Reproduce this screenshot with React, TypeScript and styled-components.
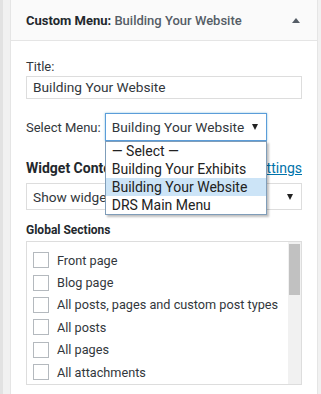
import styled, { createGlobalStyle } from 'styled-components';

const GlobalStyle = createGlobalStyle`
  body {
    margin: 0;
    background: #f1f1f1;
    font-family: Roboto, "Liberation Sans", sans-serif;
    color: #32373c;
  }
`;

const Sidebar = styled.div`
  border-left: 3px solid #e2e2e2;
  padding-left: 7px;
  height: 394px;
  overflow: hidden;
`;

const Widget = styled.div`
  width: 306px;
  margin-top: -1px;
  background: #fff;
  border: 1px solid #e5e5e5;
`;

const Header = styled.div`
  display: flex;
  align-items: center;
  justify-content: space-between;
  height: 40px;
  padding: 0 17px 0 15px;
  background: #fafafa;
  border-bottom: 1px solid #e5e5e5;
  font-size: 13px;
  font-weight: 700;
  color: #23282d;
`;

const InTitle = styled.span`
  font-weight: 500;
  color: #555d66;
`;

const Caret = styled.span`
  width: 0;
  height: 0;
  border-left: 4px solid transparent;
  border-right: 4px solid transparent;
  border-bottom: 5px solid #555d66;
`;

const Body = styled.div`
  padding: 17px 15px 20px;
`;

const Label = styled.div`
  font-size: 13px;
  line-height: 17px;
`;

const TextInput = styled.div`
  height: 21px;
  margin-top: 1px;
  padding: 0 6px;
  border: 1px solid #ddd;
  font-size: 13.7px;
  line-height: 21px;
  color: #32373c;
`;

const MenuRow = styled.div`
  display: flex;
  align-items: center;
  gap: 4px;
  margin-top: 14px;
`;

const SelectWrap = styled.div`
  position: relative;
`;

const SelectBox = styled.div<{ $focused?: boolean; $width: string }>`
  display: flex;
  align-items: center;
  justify-content: space-between;
  box-sizing: border-box;
  width: ${(p) => p.$width};
  height: ${(p) => (p.$focused ? '28px' : '27px')};
  padding: 0 8px 0 6px;
  border: 1px solid ${(p) => (p.$focused ? '#5b9dd9' : '#ddd')};
  box-shadow: ${(p) => (p.$focused ? '0 0 2px rgba(30, 140, 190, 0.5)' : 'none')};
  background: #fff;
  font-size: 13.7px;
  color: #32373c;
  white-space: nowrap;
`;

const Arrow = styled.span`
  width: 0;
  height: 0;
  border-left: 3.5px solid transparent;
  border-right: 3.5px solid transparent;
  border-top: 6px solid #222;
`;

const Dropdown = styled.ul`
  position: absolute;
  top: 100%;
  left: 0;
  right: 0;
  margin: 0;
  padding: 0;
  list-style: none;
  background: #fff;
  border: 1px solid #7f9db9;
  box-shadow: 2px 2px 2px rgba(0, 0, 0, 0.25);
  z-index: 2;
`;

const Option = styled.li<{ $selected?: boolean }>`
  height: 18px;
  padding-left: 6px;
  font-size: 14px;
  line-height: 18px;
  color: #222;
  background: ${(p) => (p.$selected ? '#cce4f7' : 'transparent')};
  white-space: nowrap;
`;

const SectionHead = styled.div`
  display: flex;
  justify-content: space-between;
  align-items: baseline;
  margin-top: 19px;
  font-size: 14px;
  font-weight: 700;
  color: #23282d;
`;

const SettingsLink = styled.a`
  font-size: 14px;
  font-weight: 400;
  color: #0073aa;
  text-decoration: underline;
`;

const ContextSelect = styled.div`
  margin-top: 7px;
`;

const GroupTitle = styled.div`
  margin-top: 13px;
  font-size: 12px;
  font-weight: 700;
  color: #23282d;
`;

const CheckList = styled.div`
  display: flex;
  height: 142px;
  margin-top: 4px;
  border: 1px solid #ddd;
  background: #fff;
`;

const Items = styled.div`
  flex: 1;
  padding: 7px 0 0 6px;
`;

const CheckRow = styled.label`
  display: flex;
  align-items: center;
  gap: 8px;
  height: 22.4px;
  font-size: 12.7px;
  color: #32373c;
  white-space: nowrap;
`;

const Box = styled.span`
  box-sizing: border-box;
  width: 16px;
  height: 16px;
  border: 1px solid #b4b9be;
  background: #fff;
`;

const Track = styled.div`
  width: 13px;
  padding: 2px 1px 0;
  box-sizing: border-box;
  background: #f1f1f1;
`;

const Thumb = styled.div`
  height: 51px;
  background: #c1c1c1;
`;

const sections = [
  'Front page',
  'Blog page',
  'All posts, pages and custom post types',
  'All posts',
  'All pages',
  'All attachments',
];

const menus = ['— Select —', 'Building Your Exhibits', 'Building Your Website', 'DRS Main Menu'];

const App = () => (
  <>
    <GlobalStyle />
    <Sidebar>
      <Widget>
        <Header>
          <div>
            Custom Menu<span>:</span> <InTitle>Building Your Website</InTitle>
          </div>
          <Caret />
        </Header>
        <Body>
          <Label>Title:</Label>
          <TextInput>Building Your Website</TextInput>
          <MenuRow>
            <Label>Select Menu:</Label>
            <SelectWrap>
              <SelectBox $focused $width="162px">
                Building Your Website
                <Arrow />
              </SelectBox>
              <Dropdown>
                {menus.map((m) => (
                  <Option key={m} $selected={m === 'Building Your Website'}>
                    {m}
                  </Option>
                ))}
              </Dropdown>
            </SelectWrap>
          </MenuRow>
          <SectionHead>
            Widget Context
            <SettingsLink href="#">Settings</SettingsLink>
          </SectionHead>
          <ContextSelect>
            <SelectBox $width="100%">
              Show widget everywhere
              <Arrow />
            </SelectBox>
          </ContextSelect>
          <GroupTitle>Global Sections</GroupTitle>
          <CheckList>
            <Items>
              {sections.map((s) => (
                <CheckRow key={s}>
                  <Box />
                  {s}
                </CheckRow>
              ))}
            </Items>
            <Track>
              <Thumb />
            </Track>
          </CheckList>
        </Body>
      </Widget>
    </Sidebar>
  </>
);

export default App;
